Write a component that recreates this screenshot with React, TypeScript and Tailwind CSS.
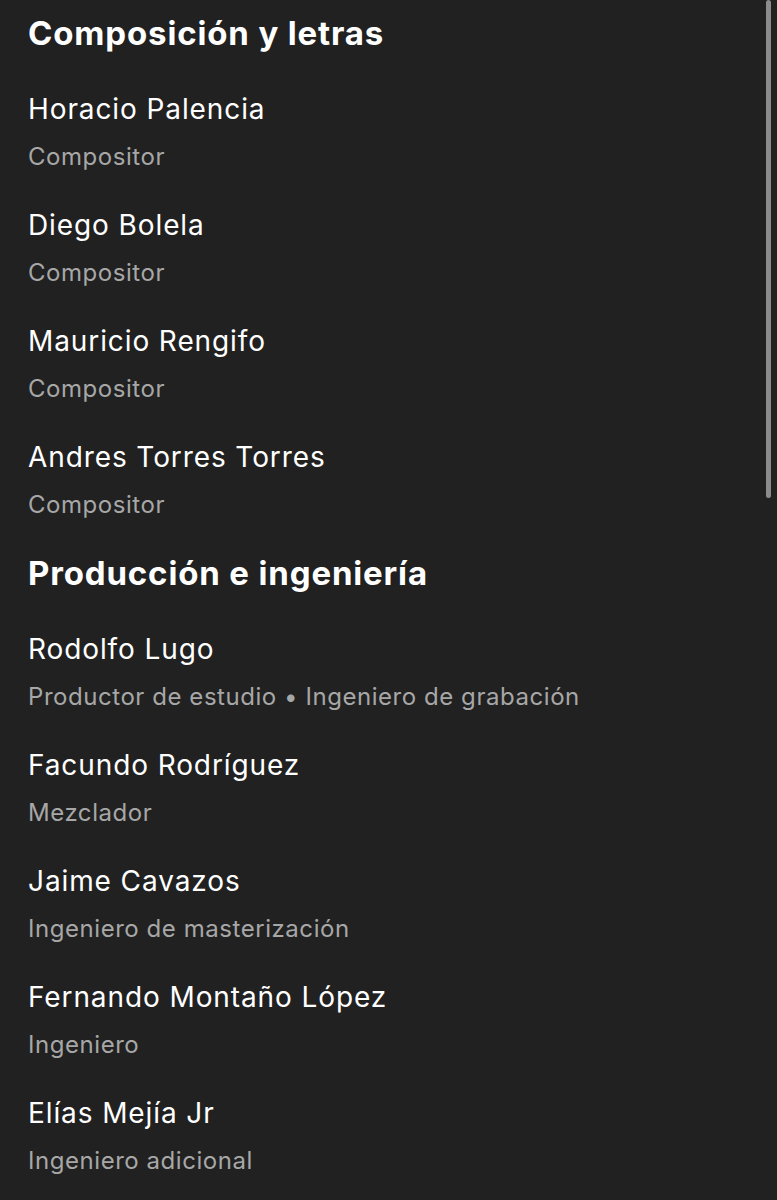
import React from "react";

type Credit = { name: string; role: string };

const sections: { title: string; credits: Credit[] }[] = [
  {
    title: "Composición y letras",
    credits: [
      { name: "Horacio Palencia", role: "Compositor" },
      { name: "Diego Bolela", role: "Compositor" },
      { name: "Mauricio Rengifo", role: "Compositor" },
      { name: "Andres Torres Torres", role: "Compositor" },
    ],
  },
  {
    title: "Producción e ingeniería",
    credits: [
      { name: "Rodolfo Lugo", role: "Productor de estudio • Ingeniero de grabación" },
      { name: "Facundo Rodríguez", role: "Mezclador" },
      { name: "Jaime Cavazos", role: "Ingeniero de masterización" },
      { name: "Fernando Montaño López", role: "Ingeniero" },
      { name: "Elías Mejía Jr", role: "Ingeniero adicional" },
    ],
  },
];

export default function App() {
  return (
    <div
      className="relative h-[1200px] w-[777px] overflow-hidden bg-[#212121] px-[28px] pt-[13px]"
      style={{ fontFamily: "Inter, 'Noto Sans', sans-serif" }}
    >
      <div className="flex flex-col gap-[32px]">
        {sections.map((s) => (
          <section key={s.title} className="flex flex-col">
            <h2 className="mb-[38px] text-[33px] leading-[40px] font-bold tracking-[0.85px] text-white">
              {s.title}
            </h2>
            <ul className="flex flex-col gap-[34px]">
              {s.credits.map((c) => (
                <li key={c.name} className="flex flex-col gap-[14px]">
                  <span className="text-[28px] leading-[36px] tracking-[0.9px] text-white">
                    {c.name}
                  </span>
                  <span className="text-[24px] leading-[32px] tracking-[0.55px] text-[#a7a7a7]">
                    {c.role}
                  </span>
                </li>
              ))}
            </ul>
          </section>
        ))}
      </div>
      {/* scroll thumb */}
      <div className="absolute top-0 left-[766px] h-[498px] w-[5px] rounded-full bg-[#8c8c8c]" />
    </div>
  );
}
